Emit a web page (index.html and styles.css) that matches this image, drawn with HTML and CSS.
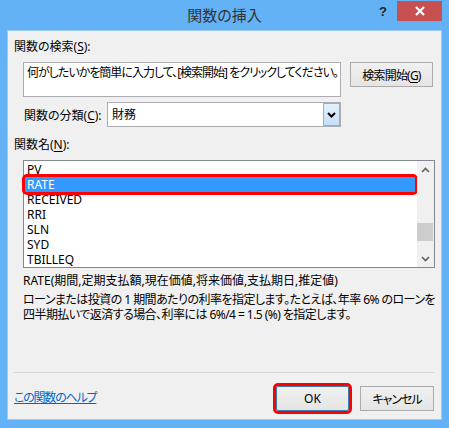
FILE: index.html
```html
<!DOCTYPE html>
<html lang="ja">
<head>
    <meta charset="UTF-8">
    <title>関数の挿入</title>
    <link rel="stylesheet" href="styles.css">
</head>
<body>
    <div class="window">
        <div class="titlebar">
            <div></div>
            <div class="title">関数の挿入</div>
            <div class="controls">
                <span class="help">?</span>
                <span class="close">
                    <svg width="10" height="10" viewBox="0 0 10 10">
                        <path d="M1 1 L9 9 M9 1 L1 9" stroke="#fff" stroke-width="2.2" fill="none"/>
                    </svg>
                </span>
            </div>
        </div>

        <div class="panel">
            <div class="label">関数の検索(<u>S</u>):</div>

            <div class="search-row">
                <div class="search-box">何がしたいかを簡単に入力して、[検索開始] をクリックしてください。</div>
                <button class="btn search-btn"><span>検索開始(<u>G</u>)</span></button>
            </div>

            <div class="category-row">
                <span class="category-label">関数の分類(<u>C</u>):</span>
                <div class="combo">
                    <span class="combo-value">財務</span>
                    <span class="combo-btn">
                        <svg width="9" height="6" viewBox="0 0 9 6">
                            <path d="M1 1 L4.5 4.5 L8 1" stroke="#000" stroke-width="2" fill="none"/>
                        </svg>
                    </span>
                </div>
            </div>

            <div class="label names-label">関数名(<u>N</u>):</div>

            <div class="listbox">
                <ul class="items">
                    <li>PV</li>
                    <li class="selected">RATE</li>
                    <li>RECEIVED</li>
                    <li>RRI</li>
                    <li>SLN</li>
                    <li>SYD</li>
                    <li>TBILLEQ</li>
                </ul>
                <div class="scrollbar">
                    <span class="arrow">
                        <svg width="9" height="6" viewBox="0 0 9 6">
                            <path d="M1 5 L4.5 1.5 L8 5" stroke="#606060" stroke-width="1.6" fill="none"/>
                        </svg>
                    </span>
                    <div class="track"><div class="thumb"></div></div>
                    <span class="arrow">
                        <svg width="9" height="6" viewBox="0 0 9 6">
                            <path d="M1 1 L4.5 4.5 L8 1" stroke="#606060" stroke-width="1.6" fill="none"/>
                        </svg>
                    </span>
                </div>
            </div>

            <div class="syntax">RATE(期間,定期支払額,現在価値,将来価値,支払期日,推定値)</div>
            <div class="desc">ローンまたは投資の 1 期間あたりの利率を指定します。たとえば、年率 6% のローンを<br>四半期払いで返済する場合、利率には 6%/4 = 1.5 (%) を指定します。</div>

            <div class="separator"></div>

            <div class="footer">
                <a href="#" class="help-link">この関数のヘルプ</a>
                <div class="buttons">
                    <button class="btn ok-btn">OK</button>
                    <button class="btn cancel-btn">キャンセル</button>
                </div>
            </div>
        </div>
    </div>
</body>
</html>
```

FILE: styles.css
```css
body {
    margin: 0;
    padding: 0;
    font-family: "Noto Sans", "Noto Sans CJK JP", sans-serif;
    font-size: 12px;
    font-feature-settings: "palt";
    color: #000;
}
u {
    text-decoration-thickness: 1px;
    text-underline-offset: 2px;
}
.window {
    width: 449px;
    height: 428px;
    background-color: #63b2f6;
    display: flex;
    flex-direction: column;
}
.titlebar {
    height: 30px;
    display: grid;
    grid-template-columns: 1fr auto 1fr;
    flex-shrink: 0;
}
.title {
    font-size: 15px;
    line-height: 30px;
    color: #333;
}
.controls {
    display: flex;
    justify-content: flex-end;
    align-items: flex-start;
    padding-right: 7px;
}
.help {
    font-family: "Liberation Sans", sans-serif;
    font-weight: bold;
    font-size: 13px;
    line-height: 14px;
    color: #222;
    margin-top: 5px;
    margin-right: 10px;
}
.close {
    width: 45px;
    height: 20px;
    margin-top: 1px;
    background-color: #c75050;
    display: flex;
    justify-content: center;
    align-items: center;
}
.panel {
    flex: 1;
    margin: 0 7px 8px;
    background-color: #f0f0f0;
    border: 1px solid #9fcaf3;
    padding: 8px 7px 8px 6px;
    display: flex;
    flex-direction: column;
}
.label {
    line-height: 16px;
}
.search-row {
    display: flex;
    align-items: flex-start;
    margin-top: 7px;
    margin-left: 9px;
}
.search-box {
    flex-shrink: 0;
    width: 318px;
    height: 35px;
    box-sizing: border-box;
    background-color: #fff;
    border: 1px solid #abadb3;
    padding: 2px 3px;
    line-height: 16px;
    letter-spacing: -1px;
    white-space: nowrap;
    overflow: hidden;
}
.btn {
    font-family: inherit;
    font-size: 12px;
    font-feature-settings: "palt";
    color: #000;
    height: 25px;
    padding: 0;
    white-space: nowrap;
    flex-shrink: 0;
    border: 1px solid #acacac;
    border-radius: 0;
    background: linear-gradient(#f0f0f0, #e5e5e5);
    text-align: center;
}
.search-btn {
    width: 83px;
    margin-left: 9px;
    letter-spacing: -0.8px;
}
.category-row {
    display: flex;
    align-items: center;
    margin-top: 5px;
    margin-left: 10px;
}
.category-label {
    width: 83px;
}
.combo {
    width: 234px;
    height: 25px;
    box-sizing: border-box;
    background-color: #fff;
    border: 1px solid #abadb3;
    display: flex;
    justify-content: space-between;
}
.combo-value {
    padding-left: 4px;
    line-height: 23px;
}
.combo-btn {
    width: 17px;
    box-sizing: border-box;
    border: 1px solid #7eb4ea;
    background: linear-gradient(#e5f1fb, #c4e0fa);
    display: flex;
    justify-content: center;
    align-items: center;
}
.names-label {
    margin-top: 10px;
}
.listbox {
    margin-top: 7px;
    margin-left: 9px;
    width: 412px;
    height: 108px;
    box-sizing: border-box;
    border: 1px solid #828790;
    background-color: #fff;
    display: flex;
}
.items {
    list-style: none;
    margin: 0;
    padding: 1px 0 0;
    flex: 1;
}
.items li {
    height: 15px;
    line-height: 15px;
    margin: 0 2px 0 1px;
    padding-left: 2px;
}
.items li.selected {
    background-color: #3399ff;
    color: #fff;
    outline: 3px solid #ff0000;
    border-radius: 2px;
}
.scrollbar {
    width: 17px;
    background-color: #f0f0f0;
    display: flex;
    flex-direction: column;
}
.arrow {
    height: 17px;
    display: flex;
    justify-content: center;
    align-items: center;
}
.track {
    flex: 1;
}
.thumb {
    margin: 45px 1px 0 0;
    height: 18px;
    background-color: #cdcdcd;
}
.syntax {
    margin-top: 5px;
    margin-left: 9px;
    line-height: 16px;
}
.desc {
    margin-top: 3px;
    margin-left: 9px;
    line-height: 15px;
    letter-spacing: -0.55px;
    white-space: nowrap;
}
.separator {
    margin-top: auto;
    height: 1px;
    background-color: #d7d7d7;
}
.footer {
    margin-top: 13px;
    display: flex;
    justify-content: space-between;
    align-items: center;
}
.help-link {
    color: #0066cc;
    text-decoration: underline;
    letter-spacing: -1.2px;
    margin-top: -4px;
}
.buttons {
    display: flex;
    gap: 11px;
}
.buttons .btn {
    width: 74px;
}
.cancel-btn {
    letter-spacing: -1px;
}
.buttons .ok-btn {
    width: 73px;
    border-color: #3c7fb1;
    outline: 3px solid #ff0000;
    border-radius: 2px;
}
```
